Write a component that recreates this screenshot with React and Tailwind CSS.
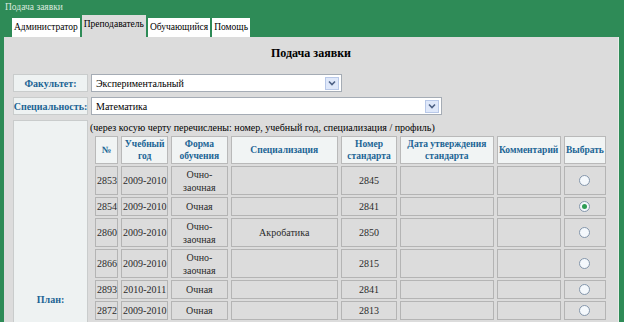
import React, { useState } from "react";

const rows = [
  { id: "2853", year: "2009-2010", form: "Очно-заочная", spec: "", std: "2845" },
  { id: "2854", year: "2009-2010", form: "Очная", spec: "", std: "2841" },
  { id: "2860", year: "2009-2010", form: "Очно-заочная", spec: "Акробатика", std: "2850" },
  { id: "2866", year: "2009-2010", form: "Очно-заочная", spec: "", std: "2815" },
  { id: "2893", year: "2010-2011", form: "Очная", spec: "", std: "2841" },
  { id: "2872", year: "2009-2010", form: "Очная", spec: "", std: "2813" },
];

const tabs = ["Администратор", "Преподаватель", "Обучающийся", "Помощь"];

function Select({ value, width }) {
  return (
    <div
      className={`flex h-[18px] items-center justify-between border border-[#a5acb5] bg-white pl-[4px] pr-[2px] ${width}`}
    >
      <span className="text-[10px] text-black">{value}</span>
      <span className="flex h-[13px] w-[14px] items-center justify-center border border-[#b8c8e8] bg-[#dfe8fa]">
        <svg width="8" height="6" viewBox="0 0 8 6">
          <path d="M1 1.5 L4 4.5 L7 1.5" fill="none" stroke="#4d6185" strokeWidth="1.6" />
        </svg>
      </span>
    </div>
  );
}

function Radio({ checked, onClick }) {
  return (
    <button
      onClick={onClick}
      className="mx-auto flex h-[11px] w-[11px] items-center justify-center rounded-full border border-[#8496ab] bg-[#f4f8fc]"
    >
      {checked && <span className="h-[5px] w-[5px] rounded-full bg-[#2f9d55]" />}
    </button>
  );
}

function Label({ children, className = "" }) {
  return (
    <div
      className={`flex w-[75px] shrink-0 justify-center whitespace-nowrap border border-[#c9cccc] bg-[#eef2f2] text-[10px] font-bold text-[#1b6494] ${className}`}
    >
      {children}
    </div>
  );
}

export default function App() {
  const [selected, setSelected] = useState("2854");

  const th =
    "border border-[#b9b9b9] bg-[#f1f4f4] px-[1px] text-center align-middle text-[9.5px] font-bold leading-[12px] text-[#1b6494]";
  const td =
    "border border-[#b4b4b4] px-[1px] text-center align-middle text-[10px] leading-[13px] text-[#2b2b2b] whitespace-nowrap";

  return (
    <div className="h-[322px] w-[624px] overflow-hidden bg-[#2e8b57] font-['Liberation_Serif','Times_New_Roman','DejaVu_Serif',serif]">
      <div className="h-[15px] pl-[5px] pt-[2px] text-[9.5px] leading-[11px] text-[#dbe9df]">
        Подача заявки
      </div>

      <div className="flex h-[22px] items-end gap-[2px] pl-[12px]">
        {tabs.map((t) => {
          const active = t === "Преподаватель";
          return (
            <div
              key={t}
              className={
                active
                  ? "flex h-[22px] items-start bg-[#dcdcdc] px-[2px] pt-[3px] text-[9.5px] leading-[13px] text-black"
                  : "flex h-[19px] items-center bg-white px-[2px] text-[9.5px] leading-[13px] text-black"
              }
            >
              {t}
            </div>
          );
        })}
      </div>

      <div className="ml-[4px] mr-[5px] h-[300px] border-r border-[#e9eeea] bg-[#dcdcdc]">
        <div className="pt-[8px] text-center text-[12px] font-bold leading-[16px] text-black">
          Подача заявки
        </div>

        <div className="mt-[13px] flex flex-col gap-[5px] pl-[9px]">
          <div className="flex items-center gap-[3px]">
            <Label className="h-[18px] items-center">Факультет:</Label>
            <Select value="Экспериментальный" width="w-[251px]" />
          </div>
          <div className="flex items-center gap-[3px]">
            <Label className="h-[18px] items-center">Специальность:</Label>
            <Select value="Математика" width="w-[351px]" />
          </div>

          <div className="flex gap-[1px]">
            <Label className="h-[210px] items-end pb-[22px]">План:</Label>
            <div className="flex flex-col">
              <div className="pl-[1px] pt-[2px] text-[10px] leading-[12px] text-black">
                (через косую черту перечислены: номер, учебный год, специализация / профиль)
              </div>
              <table className="ml-[3px] table-fixed border-separate border-spacing-x-[3px] border-spacing-y-[2px] w-[517px]">
                <colgroup>
                  <col className="w-[23px]" />
                  <col className="w-[47px]" />
                  <col className="w-[56px]" />
                  <col className="w-[107px]" />
                  <col className="w-[56px]" />
                  <col className="w-[93px]" />
                  <col className="w-[64px]" />
                  <col className="w-[42px]" />
                </colgroup>
                <thead>
                  <tr className="h-[28px]">
                    <th className={th}>№</th>
                    <th className={th}>Учебный год</th>
                    <th className={th}>Форма обучения</th>
                    <th className={th}>Специализация</th>
                    <th className={th}>Номер стандарта</th>
                    <th className={th}>Дата утверждения стандарта</th>
                    <th className={th}>Комментарий</th>
                    <th className={th}>Выбрать</th>
                  </tr>
                </thead>
                <tbody>
                  {rows.map((r) => {
                    const twoLine = r.form === "Очно-заочная";
                    return (
                      <tr key={r.id} className={twoLine ? "h-[29px]" : "h-[19px]"}>
                        <td className={`${td} px-0`}>{r.id}</td>
                        <td className={td}>{r.year}</td>
                        <td className={td}>
                          {twoLine ? (
                            <>
                              Очно-
                              <br />
                              заочная
                            </>
                          ) : (
                            r.form
                          )}
                        </td>
                        <td className={td}>{r.spec}</td>
                        <td className={td}>{r.std}</td>
                        <td className={td}></td>
                        <td className={td}></td>
                        <td className={td}>
                          <Radio checked={selected === r.id} onClick={() => setSelected(r.id)} />
                        </td>
                      </tr>
                    );
                  })}
                </tbody>
              </table>
            </div>
          </div>
        </div>
      </div>
    </div>
  );
}
